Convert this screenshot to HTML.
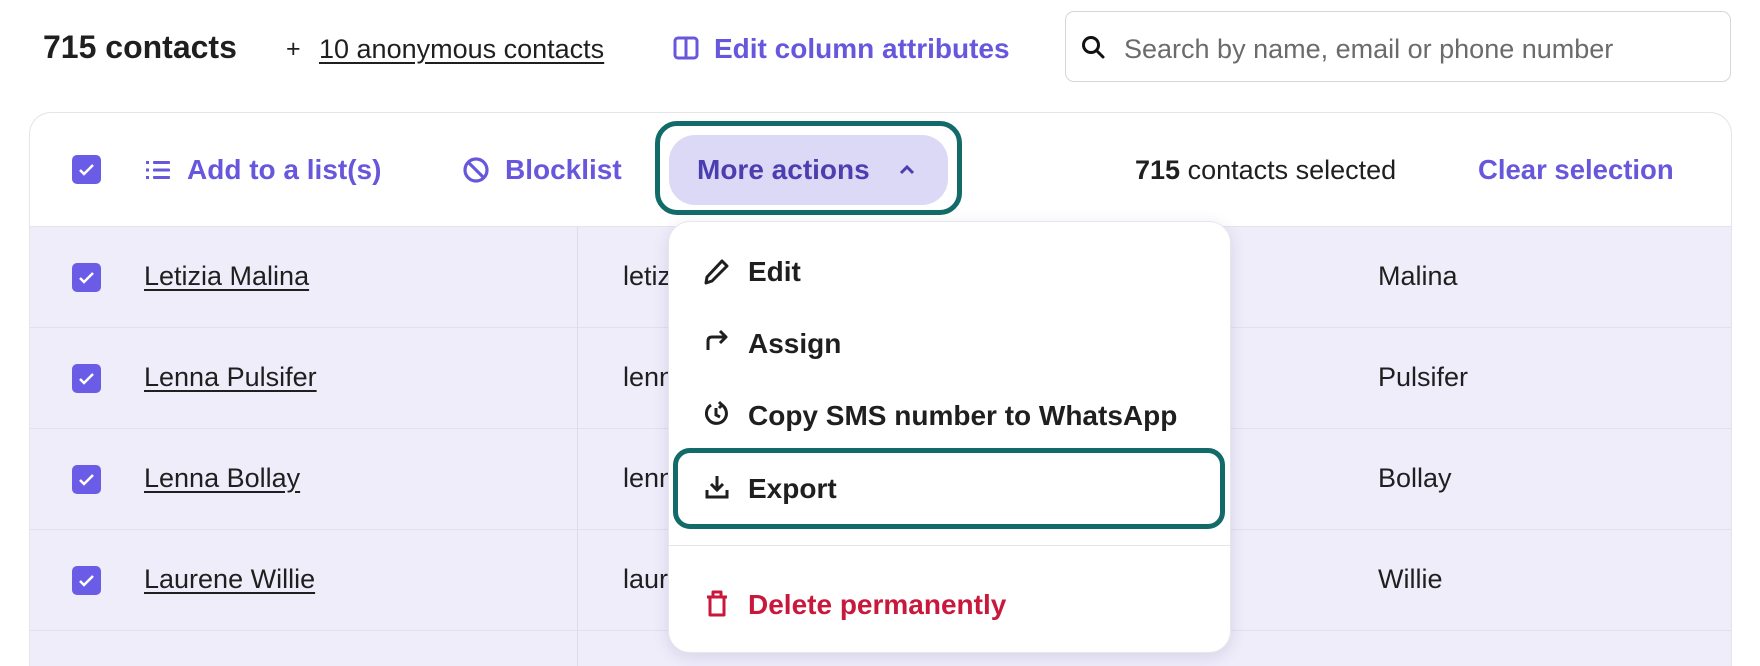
<!DOCTYPE html>
<html><head><meta charset="utf-8"><style>
*{box-sizing:border-box;margin:0;padding:0}
html,body{width:1760px;height:666px;overflow:hidden}
body{background:#fff;font-family:"Liberation Sans",Arial,sans-serif;color:#1f1f1f;position:relative}
.a{position:absolute;white-space:nowrap}
.p{color:#6757dc;font-weight:bold}
.cb{position:absolute;width:29px;height:29px;border-radius:5px;background:#6b5ce7}
.cb svg{position:absolute;left:5px;top:5px}
.row{position:absolute;left:30px;width:1701px;height:101px;background:#efedfa;border-top:1px solid #e2e0ef}
.name{position:absolute;left:114px;top:34px;font-size:27px;text-decoration:underline;text-underline-offset:4px;color:#1f1f1f}
.em{position:absolute;left:593px;top:34px;font-size:27px}
.ln{position:absolute;left:1348px;top:34px;font-size:27px}
.mi{position:absolute;left:748px;font-size:28px;font-weight:bold;color:#1f1f1f}
</style></head><body>

<div class="a" style="left:43px;top:29px;font-size:32px;font-weight:bold">715 contacts</div>
<div class="a" style="left:286px;top:35px;font-size:25px">+</div>
<div class="a" style="left:319px;top:34px;font-size:27px;text-decoration:underline;text-underline-offset:4px">10 anonymous contacts</div>
<svg class="a" style="left:673px;top:36px" width="26" height="24" viewBox="0 0 26 24"><rect x="2" y="2" width="22" height="20" rx="3" fill="none" stroke="#6757dc" stroke-width="3"/><line x1="13" y1="2" x2="13" y2="22" stroke="#6757dc" stroke-width="3"/></svg>
<div class="a p" style="left:714px;top:33px;font-size:28px">Edit column attributes</div>

<div class="a" style="left:1065px;top:11px;width:666px;height:71px;border:1px solid #d6d6d6;border-radius:9px"></div>
<svg class="a" style="left:1081px;top:35px" width="25" height="25" viewBox="0 0 25 25"><circle cx="10" cy="10" r="7.5" fill="none" stroke="#111" stroke-width="3"/><line x1="15.5" y1="15.5" x2="22" y2="22" stroke="#111" stroke-width="3" stroke-linecap="round"/></svg>
<div class="a" style="left:1124px;top:34px;font-size:27px;color:#6b6b6b">Search by name, email or phone number</div>

<div class="a" style="left:29px;top:112px;width:1703px;height:554px;border:1px solid #e4e4ea;border-bottom:none;border-radius:22px 22px 0 0;background:#fff"></div>
<div class="row" style="top:226px"><div class="cb" style="left:42px;top:36px"><svg width="19" height="19" viewBox="0 0 19 19"><path d="M3 10l4 4 9-9" fill="none" stroke="#fff" stroke-width="2.5"/></svg></div><div class="name">Letizia Malina</div><div class="em">letiz</div><div class="ln">Malina</div></div>
<div class="row" style="top:327px"><div class="cb" style="left:42px;top:36px"><svg width="19" height="19" viewBox="0 0 19 19"><path d="M3 10l4 4 9-9" fill="none" stroke="#fff" stroke-width="2.5"/></svg></div><div class="name">Lenna Pulsifer</div><div class="em">lenn</div><div class="ln">Pulsifer</div></div>
<div class="row" style="top:428px"><div class="cb" style="left:42px;top:36px"><svg width="19" height="19" viewBox="0 0 19 19"><path d="M3 10l4 4 9-9" fill="none" stroke="#fff" stroke-width="2.5"/></svg></div><div class="name">Lenna Bollay</div><div class="em">lenn</div><div class="ln">Bollay</div></div>
<div class="row" style="top:529px"><div class="cb" style="left:42px;top:36px"><svg width="19" height="19" viewBox="0 0 19 19"><path d="M3 10l4 4 9-9" fill="none" stroke="#fff" stroke-width="2.5"/></svg></div><div class="name">Laurene Willie</div><div class="em">laur</div><div class="ln">Willie</div></div>
<div class="row" style="top:630px;height:36px"></div>
<div class="a" style="left:577px;top:226px;width:1px;height:440px;background:#dedcec"></div>

<div class="cb" style="left:72px;top:155px"><svg width="19" height="19" viewBox="0 0 19 19"><path d="M3 10l4 4 9-9" fill="none" stroke="#fff" stroke-width="2.5"/></svg></div>
<svg class="a" style="left:146px;top:159px" width="26" height="22" viewBox="0 0 26 22"><g fill="#6757dc"><rect x="0" y="2" width="3" height="3"/><rect x="0" y="9.5" width="3" height="3"/><rect x="0" y="17" width="3" height="3"/><rect x="7" y="2" width="17" height="3" rx="1"/><rect x="7" y="9.5" width="17" height="3" rx="1"/><rect x="7" y="17" width="17" height="3" rx="1"/></g></svg>
<div class="a p" style="left:187px;top:154px;font-size:28px">Add to a list(s)</div>
<svg class="a" style="left:462px;top:156px" width="28" height="28" viewBox="0 0 28 28"><circle cx="14" cy="14" r="11" fill="none" stroke="#6757dc" stroke-width="3.2"/><line x1="6.5" y1="6.5" x2="21.5" y2="21.5" stroke="#6757dc" stroke-width="3.2"/></svg>
<div class="a p" style="left:505px;top:154px;font-size:28px">Blocklist</div>

<div class="a" style="left:655px;top:121px;width:307px;height:94px;border:5px solid #126b68;border-radius:22px"></div>
<div class="a" style="left:669px;top:135px;width:279px;height:70px;background:#dcd9f6;border-radius:26px"></div>
<div class="a" style="left:697px;top:154px;font-size:28px;font-weight:bold;color:#4b3fb0">More actions</div>
<svg class="a" style="left:897px;top:163px" width="20" height="14" viewBox="0 0 20 14"><path d="M4 10l6-6 6 6" fill="none" stroke="#4b3fb0" stroke-width="3"/></svg>

<div class="a" style="left:1135px;top:155px;font-size:27px"><b>715</b> contacts selected</div>
<div class="a p" style="left:1478px;top:154px;font-size:27.5px">Clear selection</div>
<div class="a" style="left:29px;top:226px;width:1703px;height:1px;background:#e4e4ea"></div>

<div class="a" style="left:668px;top:221px;width:563px;height:432px;background:#fff;border:1px solid #e6e6ee;border-radius:22px;box-shadow:0 4px 16px rgba(40,30,90,.12)"></div>
<svg class="a" style="left:704px;top:258px" width="26" height="28" viewBox="0 0 26 28"><path d="M18 3l5 5L8 23l-6 2 1-6z" fill="none" stroke="#1f1f1f" stroke-width="3" stroke-linejoin="round"/></svg>
<div class="mi" style="top:256px">Edit</div>
<svg class="a" style="left:704px;top:328px" width="26" height="26" viewBox="0 0 26 26"><path d="M4 22V13q0-4 4-4h14M16 3l6 6-6 6" fill="none" stroke="#1f1f1f" stroke-width="3" stroke-linejoin="round"/></svg>
<div class="mi" style="top:328px">Assign</div>
<svg class="a" style="left:704px;top:400px" width="26" height="28" viewBox="0 0 26 28"><path d="M17 4.5A10 10 0 1 1 7 5" fill="none" stroke="#1f1f1f" stroke-width="3"/><path d="M12 8v7l4 2M15 2l3 3-3 3" fill="none" stroke="#1f1f1f" stroke-width="3"/></svg>
<div class="mi" style="top:400px">Copy SMS number to WhatsApp</div>
<div class="a" style="left:673px;top:448px;width:552px;height:81px;border:5px solid #126b68;border-radius:17px"></div>
<svg class="a" style="left:704px;top:474px" width="26" height="26" viewBox="0 0 26 26"><path d="M13 2v13M7 10l6 6 6-6M3 16v7h20v-7" fill="none" stroke="#1f1f1f" stroke-width="3"/></svg>
<div class="mi" style="top:473px">Export</div>
<div class="a" style="left:668px;top:545px;width:563px;height:1px;background:#e4e4ea"></div>
<svg class="a" style="left:704px;top:589px" width="26" height="30" viewBox="0 0 26 30"><path d="M3 8h20M9 8V3h8v5M6 8v18h14V8" fill="none" stroke="#c8193c" stroke-width="3" stroke-linejoin="round"/></svg>
<div class="mi" style="top:589px;color:#c8193c">Delete permanently</div>
</body></html>
